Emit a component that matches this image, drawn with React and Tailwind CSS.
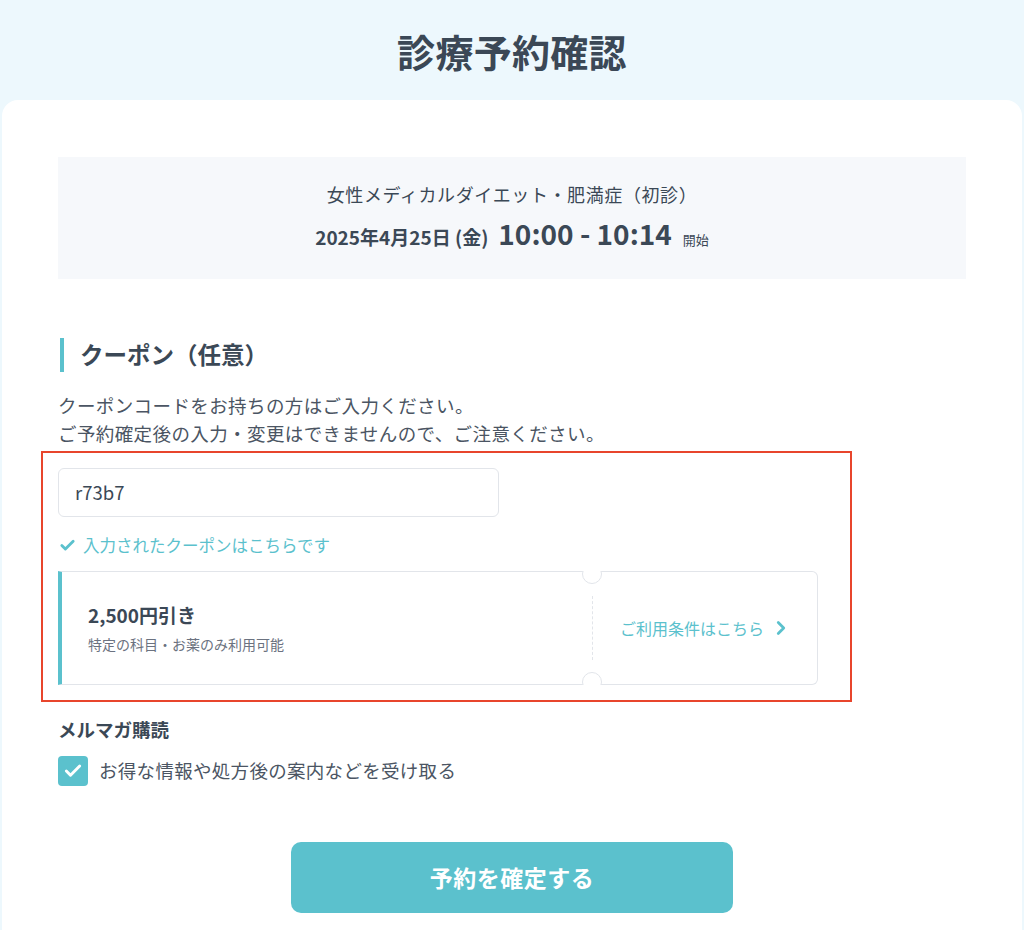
import { Check, ChevronRight } from "lucide-react";

const font = { fontFamily: '"Noto Sans CJK JP", "Noto Sans", sans-serif' };

function Summary() {
  return (
    <div className="h-[122px] bg-[#f6f8fb] flex flex-col items-center justify-center text-[#3b4856]">
      <p className="text-[18px] tracking-[0.6px] leading-[28px] mt-[4px]">女性メディカルダイエット・肥満症（初診）</p>
      <p className="mt-[5px] flex items-baseline leading-[40px]">
        <span className="text-[19px] font-bold">2025年4月25日 (金)</span>
        <span className="text-[28px] font-bold ml-[10px]">10:00 - 10:14</span>
        <span className="text-[13px] ml-[11px]">開始</span>
      </p>
    </div>
  );
}

function Notch({ bottom }) {
  return (
    <span
      className={
        bottom
          ? "absolute left-[520px] -bottom-[1px] w-[20px] h-[13px] overflow-hidden"
          : "absolute left-[520px] -top-[1px] w-[20px] h-[13px] overflow-hidden"
      }
    >
      <span
        className={
          bottom
            ? "block w-[20px] h-[20px] rounded-full bg-white border border-[#e2e5ea]"
            : "block w-[20px] h-[20px] -mt-[7px] rounded-full bg-white border border-[#e2e5ea]"
        }
      />
    </span>
  );
}

function CouponCard() {
  return (
    <div className="relative mt-[15px] w-[760px] h-[114px] flex border border-[#e2e5ea] border-l-4 border-l-[#5bc1cd] rounded-r-md bg-white">
      <div className="w-[530px] pl-[26px] flex flex-col justify-center">
        <p className="text-[19px] font-bold text-[#3b4856] leading-[26px]">2,500円引き</p>
        <p className="mt-[6px] text-[14px] text-[#6b7280] leading-[20px]">特定の科目・お薬のみ利用可能</p>
      </div>
      <div className="my-[24px] border-l border-dashed border-[#e2e5ea]" />
      <div className="flex-1 pl-[27px] flex items-center text-[#5bc1cd] text-[16px]">
        ご利用条件はこちら
        <ChevronRight className="ml-[6px] w-[22px] h-[22px]" strokeWidth={3} />
      </div>
      <Notch />
      <Notch bottom />
    </div>
  );
}

export default function App() {
  return (
    <div className="min-h-[930px] bg-[#edf8fd] text-[#3b4856]" style={font}>
      <header className="h-[100px] flex items-center justify-center">
        <h1 className="text-[38px] font-bold text-[#3b4856] tracking-[0.3px]">診療予約確認</h1>
      </header>

      <main className="mx-[2px] min-h-[830px] bg-white rounded-t-2xl px-[56px] pt-[57px]">
        <Summary />

        <h2 className="mt-[59px] flex items-center h-[34px]">
          <span className="w-[4px] h-[34px] bg-[#5bc1cd] ml-[2px]" />
          <span className="ml-[16px] text-[23.5px] font-bold">クーポン（任意）</span>
        </h2>

        <div className="mt-[19px] text-[18.5px] tracking-[0.4px] leading-[28px] text-[#4b5563]">
          <p>クーポンコードをお持ちの方はご入力ください。</p>
          <p>ご予約確定後の入力・変更はできませんので、ご注意ください。</p>
        </div>

        <div className="mt-[4px] -ml-[17px] w-[811px] border-2 border-[#e8452c] px-[15px] pt-[15px] pb-[15px]">
          <div className="w-[441px] h-[49px] border border-[#e2e5ea] rounded-md flex items-center px-[16px] text-[18.5px] text-[#3b4856]">
            r73b7
          </div>
          <p className="mt-[17px] flex items-center text-[16.5px] text-[#5bc1cd] leading-[22px]">
            <Check className="w-[17px] h-[17px] mr-[7px] ml-[1px]" strokeWidth={4} />
            入力されたクーポンはこちらです
          </p>
          <CouponCard />
        </div>

        <p className="mt-[15px] text-[18.5px] font-bold leading-[24px]">メルマガ購読</p>
        <label className="mt-[15px] flex items-center">
          <span className="w-[30px] h-[30px] rounded-[4px] bg-[#5bc1cd] flex items-center justify-center">
            <Check className="w-[20px] h-[20px] text-white" strokeWidth={3.5} />
          </span>
          <span className="ml-[11px] text-[18.5px] tracking-[0.3px] text-[#4b5563]">お得な情報や処方後の案内などを受け取る</span>
        </label>

        <div className="mt-[56px] flex justify-center">
          <button className="w-[442px] h-[71px] rounded-[10px] bg-[#5bc1cd] text-white text-[23px] font-bold tracking-[0.5px]">
            予約を確定する
          </button>
        </div>
      </main>
    </div>
  );
}
